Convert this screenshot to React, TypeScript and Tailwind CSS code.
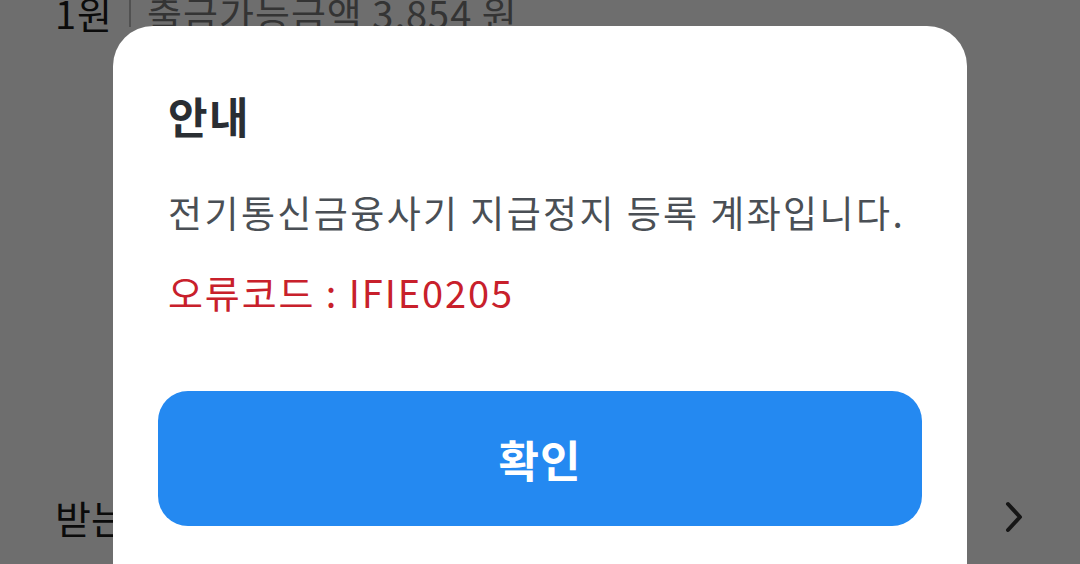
const font = "font-['Noto_Sans_CJK_KR','Noto_Sans',sans-serif]"

export default function App() {
  return (
    <div className={`relative w-[1080px] h-[564px] overflow-hidden bg-white ${font}`}>
      {/* Page behind the modal */}
      <div className="flex flex-col h-full px-[55px]">
        <div className="flex items-center gap-[16px] -mt-[18px] h-[60px] text-[38px] tracking-[1px]">
          <span className="text-[#1a1a1a]">1원</span>
          <span className="w-[2px] h-[30px] bg-[#bbb]"></span>
          <span className="text-[#7a7a7a]">출금가능금액 3,854 원</span>
        </div>
        <div className="flex-1"></div>
        <div className="flex items-center justify-between h-[70px] mb-[12px]">
          <span className="text-[39px] text-[#1a1a1a]">받는</span>
          <svg width="22" height="34" viewBox="0 0 22 34">
            <path d="M5 4 L17 17 L5 30" fill="none" stroke="#333" strokeWidth="4" strokeLinecap="round" strokeLinejoin="round" />
          </svg>
        </div>
      </div>

      {/* Dim overlay */}
      <div className="absolute inset-0 bg-black/[0.57]"></div>

      {/* Dialog */}
      <div className="absolute left-[113px] top-[26px] w-[854px] h-[600px] bg-white rounded-[40px] px-[55px] pt-[59px]">
        <h2 className="text-[43px] font-bold text-[#2a2e33] leading-[60px] tracking-[1.5px]">안내</h2>
        <p className="mt-[42px] text-[37px] text-[#4a4f55] leading-[50px] tracking-[2.4px] whitespace-nowrap">
          전기통신금융사기 지급정지 등록 계좌입니다.
        </p>
        <p className="mt-[30px] text-[38px] text-[#c8202b] leading-[50px] tracking-[1.9px]">오류코드 : IFIE0205</p>
        <button className="mt-[74px] -mx-[10px] w-[764px] h-[135px] rounded-[30px] bg-[#2489f1] text-white text-[44px] font-bold tracking-[1px]">
          확인
        </button>
      </div>
    </div>
  )
}
